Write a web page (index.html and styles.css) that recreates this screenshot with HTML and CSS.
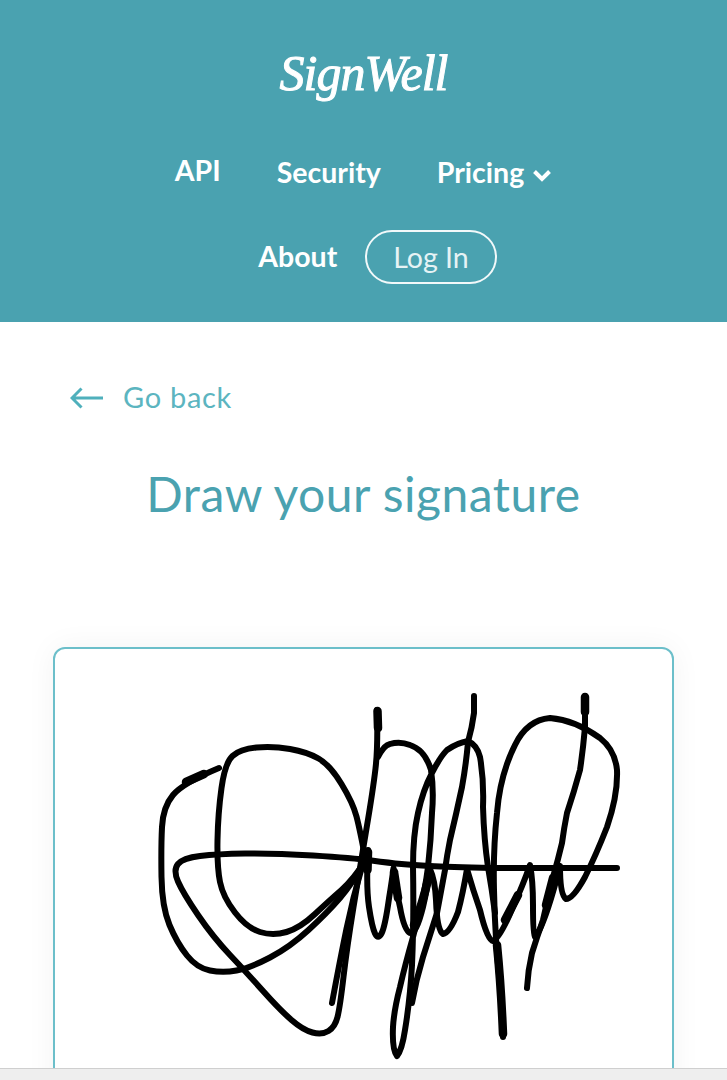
FILE: index.html
```html
<!DOCTYPE html>
<html lang="en">
<head>
<meta charset="utf-8">
<title>Draw your signature</title>
<link rel="stylesheet" href="styles.css">
</head>
<body>
<header class="site-header">
  <a class="logo" href="#">SignWell</a>
  <nav class="nav">
    <a class="nav-link nav-link-raised" href="#">API</a>
    <a class="nav-link" href="#">Security</a>
    <a class="nav-link" href="#">Pricing
      <svg class="chevron" viewBox="0 0 20 13" width="20" height="13" aria-hidden="true"><path d="M2.5 2.5 L10 10 L17.5 2.5"/></svg>
    </a>
    <a class="nav-link" href="#">About</a>
    <a class="login" href="#">Log In</a>
  </nav>
</header>
<main class="content">
  <a class="back" href="#">
    <svg class="back-arrow" viewBox="0 0 34 22" width="34" height="22" aria-hidden="true"><path d="M33 11 H2 M11.5 1.5 L2 11 L11.5 20.5"/></svg>
    <span>Go back</span>
  </a>
  <h1 class="title">Draw your signature</h1>
  <section class="pad">
    <svg class="signature" viewBox="55 649 617 500" width="617" height="500" aria-label="Drawn signature">
      <path d="M219 768 Q183 783 173 795 Q163 807 162 827 Q161 847 161.5 877 Q162 907 169.5 925 Q177 943 187 955.5 Q197 968 210 970.5 Q223 973 236.5 970.5 Q250 968 270 957.5 Q290 947 308.5 930 Q327 913 340 898 Q353 883 362 865"/>
      <path d="M366 862 Q360 830 356.5 816.5 Q353 803 341.5 784 Q330 765 318.5 758.5 Q307 752 290 749 Q273 746 256.5 747.5 Q240 749 232.5 756 Q225 763 221.5 788 Q218 813 217.5 840 Q217 867 220 882 Q223 897 235 912.5 Q247 928 260 932 Q273 936 286.5 932 Q300 928 315 914 Q330 900 341.5 890 Q353 880 366 860"/>
      <path d="M617 868 L493 868 Q447 867 430 866 Q413 865 401.5 864 Q390 863 371.5 860.5 Q353 858 313 855.5 Q273 853 245 853.5 Q217 854 200 856 Q183 858 178 864 Q173 870 178 881.5 Q183 893 198 915 Q213 937 230 955 Q247 973 263.5 991.5 Q280 1010 291.5 1020 Q303 1030 312.5 1032.5 Q322 1035 328.5 1031 Q335 1027 337.5 1017 Q340 1007 343.5 977 Q347 947 353.5 907 Q360 867 366.5 828.5 Q373 790 375.5 768.5 Q378 747 377 710"/>
      <path d="M332 1003 Q340 960 346.5 928.5 Q353 897 362 867"/>
      <path d="M368 850 Q366 887 369 907 Q372 927 375 933.5 Q378 940 381.5 933.5 Q385 927 389 898.5 Q392 880 393.5 868 Q396 890 400 907 Q404 930 410 933 Q416 935 423 907 Q427 890 430 869 Q435 880 436 900 Q437 930 443 934 Q450 933 458 912 Q463 893 467 869 Q473 890 480 910 Q487 940 493 941 Q500 938 513 907 Q523 885 530 865 Q533 880 533 905 Q533 935 535 937 Q540 932 548 908 Q554 890 560 866 Q560 895 566 899 Q573 899 585 877 Q596 855 607 827 Q618 795 617 770 Q615 750 600 738 Q575 720 550 718 Q527 720 515 745 Q500 775 497 813 Q493 850 494 890 Q495 940 500 985 Q503 1010 503 1037"/>
      <path d="M378 757 Q384 745 390 744 Q400 741 410 745 Q425 750 431 770 Q434 790 432 813 Q431 840 428 867 Q425 890 420 910 Q416 925 413 937 Q405 965 400 987 Q394 1010 393 1027 Q392 1050 397 1056 Q402 1050 405 1030 Q410 1000 412 965 Q414 920 413 867 Q413 835 418 813 Q423 790 432 773 Q440 757 447 750 Q457 743 468 741 Q477 745 480 757 Q484 780 483 807 Q484 840 488 867 Q492 890 495 913"/>
      <path d="M474 696 L474 713 Q472 728 468 742 Q466 765 462 787 Q456 815 450 840 Q447 855 445 870 Q441 892 437 913 Q430 935 423 957 Q416 980 412 1003"/>
      <path d="M585 696 L585 727 Q583 750 580 770 Q574 792 567 813 Q564 828 562 843 Q558 860 553 877 Q548 898 543 920 Q537 937 532 953 Q528 970 527 988"/>
      <path class="heavy" d="M377.5 711 L378 728"/>
      <path class="heavy" d="M585 697 L585 712"/>
      <path class="heavy" d="M497 945 Q501 985 503 1034"/>
      <path class="heavy" d="M368 852 L367.5 870"/>
      <path class="heavy" d="M394 872 L398 898"/>
      <path class="heavy" d="M414 925 Q422 905 428 880"/>
      <path class="heavy" d="M518 895 L505 920"/>
      <path class="heavy" d="M553 878 L546 905"/>
      <path class="heavy" d="M186 782 L204 774"/>
    </svg>
  </section>
</main>
<div class="bottom-bar"></div>
</body>
</html>
```
FILE: styles.css
```css
* { box-sizing: border-box; }
html, body { margin: 0; height: 1080px; overflow: hidden; background: #fff; }
body { font-family: Lato, "Open Sans", sans-serif; }
a { color: inherit; text-decoration: none; }

.site-header {
  background: #4aa2b0;
  color: #fff;
  height: 322px;
  padding-top: 32px;
  display: flex;
  flex-direction: column;
  align-items: center;
}
.logo {
  display: block;
  height: 82px;
  font-family: "Liberation Serif", serif;
  font-style: italic;
  font-size: 50px;
  line-height: 82px;
  letter-spacing: -1px;
  -webkit-text-stroke: 1px #fff;
}
.nav {
  width: 520px;
  margin-top: 29px;
  display: flex;
  flex-wrap: wrap;
  justify-content: center;
  align-items: center;
  row-gap: 28px;
}
.nav-link {
  padding: 0 28px;
  height: 54px;
  display: flex;
  align-items: center;
  gap: 8px;
  font-size: 28.5px;
  font-weight: 700;
}
.nav-link:nth-child(4) { margin-bottom: 2px; }
.nav-link-raised { margin-bottom: 4px; }
.chevron { fill: none; stroke: #fff; stroke-width: 4; margin-top: 7px; }
.login {
  height: 54px;
  padding: 0 26px;
  display: flex;
  align-items: center;
  border: 2px solid #f2f9fa;
  border-radius: 27px;
  font-size: 28.5px;
  color: #e6f3f5;
}

.content { padding: 52px 53px 0; }
.back {
  display: flex;
  align-items: center;
  gap: 19px;
  height: 44px;
  padding-left: 17px;
  color: #5cb5c0;
  font-size: 29px;
  letter-spacing: 0.7px;
}
.back-arrow { fill: none; stroke: #4fb0bc; stroke-width: 3; margin-top: 4px; }
.title {
  margin: 46px 0 0;
  height: 60px;
  text-align: center;
  color: #4aa2b0;
  font-size: 48px;
  line-height: 60px;
  font-weight: 400;
  letter-spacing: 0.5px;
}
.pad {
  margin-top: 123px;
  width: 621px;
  height: 520px;
  border: 2px solid #6cbfca;
  border-radius: 12px;
  background: #fff;
  box-shadow: 0 0 30px rgba(0, 0, 0, 0.05);
}
.signature {
  display: block;
  fill: none;
  stroke: #000;
  stroke-width: 6;
  stroke-linecap: round;
  stroke-linejoin: round;
}
.heavy { stroke-width: 8.5; }
.bottom-bar {
  position: fixed;
  left: 0;
  right: 0;
  bottom: 0;
  height: 12px;
  background: #eeeeee;
  border-top: 1px solid #cfcfcf;
}
```
